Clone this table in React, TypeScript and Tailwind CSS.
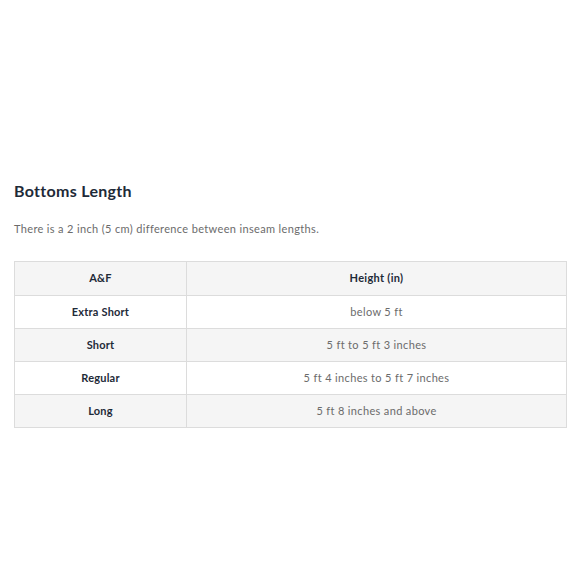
const rows = [
  { size: 'Extra Short', height: 'below 5 ft' },
  { size: 'Short', height: '5 ft to 5 ft 3 inches' },
  { size: 'Regular', height: '5 ft 4 inches to 5 ft 7 inches' },
  { size: 'Long', height: '5 ft 8 inches and above' },
];

export default function App() {
  return (
    <div className="w-[580px] h-[580px] bg-white px-[14px] pt-[180px] font-['Lato',sans-serif]">
      <h2 className="text-[16px] leading-[22px] font-bold tracking-[0.3px] text-[#1e2a38]">
        Bottoms Length
      </h2>
      <p className="mt-[20px] text-[11px] leading-[14px] tracking-[0.35px] text-[#6b6b6b]">
        There is a 2 inch (5 cm) difference between inseam lengths.
      </p>

      <div className="mt-[25px] w-[553px] border border-[#dcdcdc]">
        <div className="flex h-[33px] bg-[#f5f5f5] text-[11px] font-bold text-[#1e2a38] tracking-[0.3px]">
          <div className="w-[172px] flex items-center justify-center border-r border-[#dcdcdc]">A&amp;F</div>
          <div className="flex-1 flex items-center justify-center">Height (in)</div>
        </div>
        {rows.map((r, i) => (
          <div
            key={r.size}
            className={`flex h-[33px] border-t border-[#dcdcdc] text-[11px] ${
              i % 2 === 0 ? 'bg-white' : 'bg-[#f5f5f5]'
            }`}
          >
            <div className="w-[172px] flex items-center justify-center border-r border-[#dcdcdc] font-bold text-[#1e2a38] tracking-[0.2px]">
              {r.size}
            </div>
            <div className="flex-1 flex items-center justify-center text-[#6b6b6b] tracking-[0.35px]">
              {r.height}
            </div>
          </div>
        ))}
      </div>
    </div>
  );
}
